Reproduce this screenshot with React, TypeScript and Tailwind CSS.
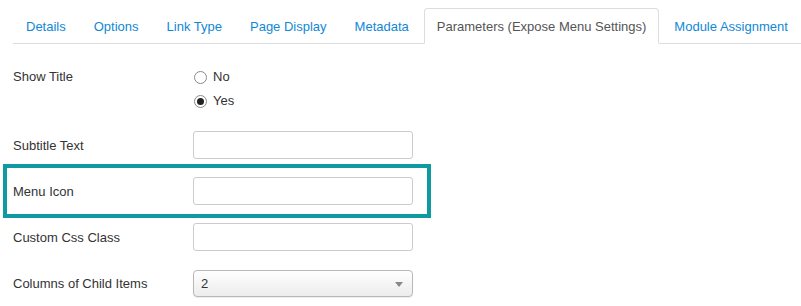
import React from "react";

const tabs = [
  "Details",
  "Options",
  "Link Type",
  "Page Display",
  "Metadata",
  "Parameters (Expose Menu Settings)",
  "Module Assignment",
];

function Radio({ checked, label }: { checked?: boolean; label: string }) {
  return (
    <div className="flex items-center h-[18px] mt-[6px]">
      <span className="ml-[1px] w-[13px] h-[13px] rounded-full border border-[#8a8a8a] bg-white flex items-center justify-center">
        {checked && <span className="w-[7px] h-[7px] rounded-full bg-[#222]" />}
      </span>
      <span className="ml-[6px] text-[#333]">{label}</span>
    </div>
  );
}

function TextInput() {
  return <div className="w-[220px] h-[28px] rounded-[3px] border border-[#cccccc] bg-white" />;
}

export default function App() {
  return (
    <div
      className="w-[801px] h-[306px] bg-white overflow-hidden text-[13px] leading-[18px] text-[#333]"
      style={{ fontFamily: '"Liberation Sans", Arial, sans-serif' }}
    >
      <div className="pl-[13px] pt-[8px]">
        <div className="flex border-b border-[#dddddd]">
          {tabs.map((t, i) => {
            const active = i === 5;
            return (
              <div
                key={t}
                className={
                  active
                    ? "mr-[2px] -mb-px px-[12px] pt-[9px] pb-[7px] border border-[#dddddd] border-b-white bg-white rounded-t-[4px] text-[#555] whitespace-nowrap"
                    : "mr-[2px] -mb-px px-[12px] pt-[9px] pb-[7px] border border-transparent text-[#1188d6] whitespace-nowrap"
                }
              >
                {t}
              </div>
            );
          })}
        </div>

        <div className="mt-[18px]">
          {/* Show Title */}
          <div className="flex mb-[21px]">
            <div className="w-[180px] pt-[6px]">Show Title</div>
            <div className="flex flex-col">
              <Radio label="No" />
              <Radio checked label="Yes" />
            </div>
          </div>

          {/* Subtitle */}
          <div className="flex mb-[18px]">
            <div className="w-[180px] pt-[6px]">Subtitle Text</div>
            <TextInput />
          </div>

          {/* Menu Icon */}
          <div className="relative flex mb-[18px]">
            <div className="w-[180px] pt-[6px]">Menu Icon</div>
            <TextInput />
            <div className="absolute left-[-10px] top-[-13px] w-[428px] h-[54px] border-[4px] border-[#0f99a1] pointer-events-none" />
          </div>

          {/* Custom Css Class */}
          <div className="flex mb-[19px]">
            <div className="w-[180px] pt-[6px]">Custom Css Class</div>
            <TextInput />
          </div>

          {/* Columns */}
          <div className="flex">
            <div className="w-[180px] pt-[5px]">Columns of Child Items</div>
            <div className="relative w-[220px] h-[27px] rounded-[4px] border border-[#b8b8b8] bg-gradient-to-b from-white to-[#ececec] flex items-center pl-[7px] shadow-[0_1px_1px_rgba(0,0,0,0.08)]">
              <span className="text-[#333]">2</span>
              <svg className="absolute right-[9px] top-[11px]" width="8" height="5" viewBox="0 0 8 5">
                <path d="M0 0 L8 0 L4 5 Z" fill="#888" />
              </svg>
            </div>
          </div>
        </div>
      </div>
    </div>
  );
}
